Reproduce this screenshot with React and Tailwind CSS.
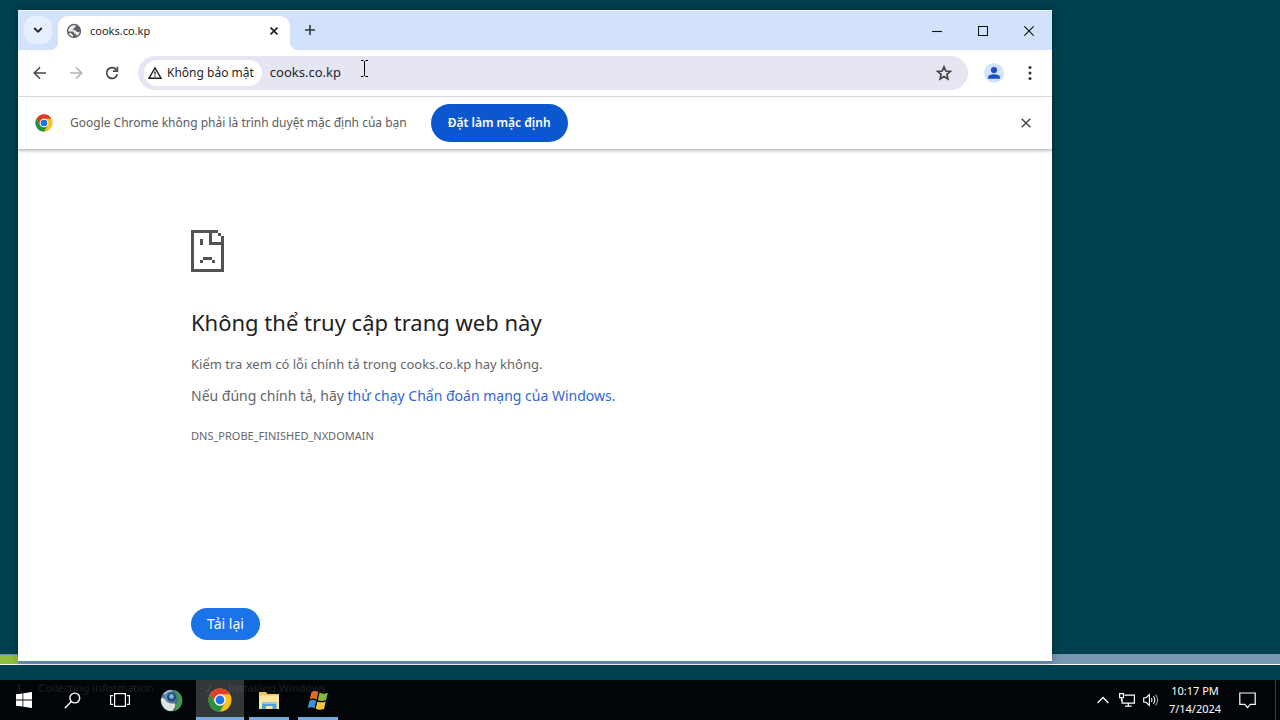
import React from 'react';
import clsx from 'clsx';

const PROGRESS_STEPS = [
  { id: 1, number: '1', label: 'Collecting information' },
  { id: 2, number: '2', label: 'Installing Windows' },
];

/* ---------- Icons ---------- */

const ChromeIcon = ({ size }) => (
  <svg width={size} height={size} viewBox="0 0 48 48" aria-hidden="true">
    <circle cx="24" cy="24" r="23" fill="#fbc116" />
    <path d="M4.08 12.5A23 23 0 0 1 43.92 12.5H24A11.5 11.5 0 0 0 14.04 29.75z" fill="#e33b2e" />
    <path d="M4.08 12.5A23 23 0 0 0 24 47L33.96 29.75A11.5 11.5 0 0 1 14.04 29.75z" fill="#229342" />
    <circle cx="24" cy="24" r="11.5" fill="#fff" />
    <circle cx="24" cy="24" r="8.8" fill="#1a73e8" />
  </svg>
);

const GlobeIcon = () => (
  <svg width="16" height="16" viewBox="0 0 16 16" aria-hidden="true">
    <circle cx="8" cy="8" r="7.2" fill="#5f6368" />
    <path d="M7.6 2.2c1.6-.2 2.3.4 2.1 1.3-.2.8-1.3.6-1.4 1.4-.1.9-1.6.6-1.6 1.5 0 .8 2.5.5 3.3 1.3.5.5.3 1.2 1.2 1.4.8.2 1.6-.4 2.4-.2-.3 1.5-1.3 3-2.6 3.8-.8-.2-.6-1.5-1.4-1.9-.7-.3-1.5 0-1.5-.8 0-.9-.7-1.4-1.7-1.4H2.3c-.2-2.9 2-6 5.3-6.4z" fill="#fff" opacity=".9" />
    <path d="M2.6 10.2h2.2c.9 0 .7 1.2 1.6 1.3.7.1.6 1.2.6 2.2-2-.3-3.6-1.7-4.4-3.500z" fill="#fff" opacity=".9" />
  </svg>
);

const ChevronDownIcon = () => (
  <svg width="10" height="10" viewBox="0 0 10 10" fill="none" stroke="#1f1f1f" strokeWidth="1.8" aria-hidden="true">
    <path d="M1.2 3L5 6.8 8.8 3" />
  </svg>
);

const CrossIcon = ({ size, color, strokeWidth }) => (
  <svg width={size} height={size} viewBox="0 0 10 10" fill="none" stroke={color} strokeWidth={strokeWidth} aria-hidden="true">
    <path d="M.7.7l8.6 8.6M9.3.7L.7 9.3" />
  </svg>
);

const PlusIcon = () => (
  <svg width="12" height="12" viewBox="0 0 12 12" fill="none" stroke="#30343c" strokeWidth="1.6" aria-hidden="true">
    <path d="M6 1v10M1 6h10" />
  </svg>
);

const ArrowIcon = ({ color, flipped }) => (
  <svg width="14" height="14" viewBox="0 0 14 14" fill="none" stroke={color} strokeWidth="1.6" aria-hidden="true">
    <path d={flipped ? 'M1 7h11M7 1.3L12.7 7 7 12.7' : 'M13 7H2M7 1.3L1.3 7 7 12.7'} />
  </svg>
);

const ReloadIcon = () => (
  <svg width="14" height="14" viewBox="0 0 14 14" fill="none" stroke="#474747" strokeWidth="1.7" aria-hidden="true">
    <path d="M12.3 8.3A5.4 5.4 0 1 1 11.3 3.7" />
    <path d="M12.4.8v4.4H8" />
  </svg>
);

const WarningIcon = () => (
  <svg width="14" height="14" viewBox="0 0 14 14" fill="none" stroke="#1f1f1f" strokeWidth="1.4" aria-hidden="true">
    <path d="M7 1.8L13 12.2H1z" />
    <path d="M7 5.4v3.2M7 9.4v1.4" />
  </svg>
);

const StarIcon = () => (
  <svg width="16" height="16" viewBox="0 0 16 16" fill="none" stroke="#474747" strokeWidth="1.7" aria-hidden="true">
    <path d="M8 1.8l1.8 4.2 4.6.4-3.5 3 1.05 4.5L8 11.5l-3.95 2.4 1.05-4.500-3.500-3 4.600-.4z" />
  </svg>
);

const AvatarIcon = () => (
  <svg width="20" height="20" viewBox="0 0 20 20" aria-hidden="true">
    <circle cx="10" cy="10" r="10" fill="#d3e3fd" />
    <circle cx="10" cy="7" r="3.1" fill="#1b4fc4" />
    <path d="M4 15.8v-1.6c0-2 3-3 6-3s6 1 6 3v1.6z" fill="#1b4fc4" />
  </svg>
);

const DotsIcon = () => (
  <svg width="4" height="14" viewBox="0 0 4 14" fill="#333" aria-hidden="true">
    <circle cx="2" cy="1.6" r="1.5" />
    <circle cx="2" cy="7" r="1.5" />
    <circle cx="2" cy="12.4" r="1.5" />
  </svg>
);

const SadPageIcon = () => (
  <svg width="33" height="42" viewBox="0 0 11 14" fill="#535353" shapeRendering="crispEdges" aria-hidden="true">
    <path d="M0 0h9v1H7v3h4v10H0zM1 1v12h9V5H6V1z" fillRule="evenodd" />
    <path d="M9 1h1v1H9zM10 2h1v3h-1zM3 3h1v2H3zM4 9h3v1H4zM3 10h1v1H3zM7 10h1v1H7z" />
  </svg>
);

const WindowsIcon = () => (
  <svg width="16" height="16" viewBox="0 0 16 16" fill="#fff" aria-hidden="true">
    <path d="M0 2.3l6.5-.9v6.2H0zM7.3 1.3L16 0v7.6H7.3zM0 8.4h6.5v6.2L0 13.7zM7.3 8.4H16V16l-8.7-1.3z" />
  </svg>
);

const SearchIcon = () => (
  <svg width="17" height="17" viewBox="0 0 17 17" fill="none" stroke="#fff" strokeWidth="1.4" aria-hidden="true">
    <circle cx="10.8" cy="6" r="4.9" />
    <path d="M7.3 9.6L.8 16.2" />
  </svg>
);

const TaskViewIcon = () => (
  <svg width="20" height="14" viewBox="0 0 20 14" fill="none" stroke="#fff" strokeWidth="1.2" aria-hidden="true">
    <path d="M4.6.6h10.8v12.8H4.6zM3 2.6H.6v8.8H3M17 2.6h2.4v8.8H17" />
  </svg>
);

const EarthIcon = () => (
  <svg width="23" height="23" viewBox="0 0 23 23" aria-hidden="true">
    <defs>
      <radialGradient id="earth" cx="0.4" cy="0.35" r="0.7">
        <stop offset="0" stopColor="#7fa9cc" />
        <stop offset="0.5" stopColor="#44708f" />
        <stop offset="1" stopColor="#3c6b48" />
      </radialGradient>
    </defs>
    <circle cx="11.5" cy="11.5" r="10.8" fill="url(#earth)" />
    <path d="M14 1.3c5 1 8.4 5.4 8.3 10.2-.1 5.4-3.7 9.3-7.3 10.3 1.5-3 .3-5.3 2-7.8 1.8-3 1.2-8-3-12.700z" fill="#43994d" />
    <path d="M.9 9.500c2.600-1.500 4 .5 5.300 2.700 2 2.600 6.200 2 8.800 2.300 1.200 2-1 6-3 7.600C5.500 22.500 .7 17.200.9 9.500z" fill="#dfe3dc" />
    <path d="M4 5.500C6 2.800 9 1.600 12 1.800" fill="none" stroke="#b9cbd4" strokeWidth="1.5" />
    <circle cx="11.5" cy="8" r="4.5" fill="#1d4a78" />
    <circle cx="11.5" cy="7.5" r="2.4" fill="#7fb0dc" />
  </svg>
);

const FolderIcon = () => (
  <svg width="22" height="19" viewBox="0 0 22 19" aria-hidden="true">
    <path d="M1 1h7l1.5 2H21v15H1z" fill="#e9c65e" />
    <path d="M1 4.5h20V18H1z" fill="#fbe69a" />
    <path d="M4 18v-6.5h14.5V18h-4v-3H8v3z" fill="#4ba3dd" />
    <path d="M4 11.5h14.5V13H4z" fill="#8fcaf0" />
  </svg>
);

const WindowsFlagIcon = () => (
  <svg width="22" height="21" viewBox="0 0 22 21" aria-hidden="true">
    <path d="M4.5 2C7 .6 9.3.7 11.3 2L9.6 9.6C7.5 8.3 5.2 8.3 2.7 9.5z" fill="#e9682c" />
    <path d="M12.5 2.6c2.3 1.3 5 1.4 8.3.2L19 10.3c-3 1.2-5.8 1-8.2-.2z" fill="#85b93c" />
    <path d="M2.4 10.7c2.5-1.2 4.8-1.1 6.9.1l-1.8 7.5C5.5 17.1 3.2 17 .7 18.2z" fill="#3f8fd8" />
    <path d="M10.5 11.4c2.4 1.2 5.2 1.3 8.2.1L17 19c-3.2 1.2-6 1-8.3-.2z" fill="#f6c73a" />
  </svg>
);

const TrayChevronIcon = () => (
  <svg width="12" height="8" viewBox="0 0 12 8" fill="none" stroke="#fff" strokeWidth="1.3" aria-hidden="true">
    <path d="M.6 7L6 1.5 11.4 7" />
  </svg>
);

const NetworkIcon = () => (
  <svg width="16" height="14" viewBox="0 0 16 14" fill="none" stroke="#fff" strokeWidth="1.2" aria-hidden="true">
    <path d="M5.5 2.1h9.9v8H3.1V6M9.3 10.1V13M6 13.2h6.6" />
    <path d="M.6.7h3.9v3.9H.6zM2.5 4.6V8" />
  </svg>
);

const VolumeIcon = () => (
  <svg width="16" height="14" viewBox="0 0 16 14" fill="none" stroke="#fff" strokeWidth="1.1" aria-hidden="true">
    <path d="M.7 4.7h2.4L6.4 1.5v11L3.1 9.3H.7z" />
    <path d="M8.4 5q1.3 2 0 4M10.5 3.3q2.6 3.7 0 7.4" />
    <path d="M12.6 1.6q4 5.4 0 10.8" stroke="#999" />
  </svg>
);

const ActionCenterIcon = () => (
  <svg width="17" height="17" viewBox="0 0 17 17" fill="none" stroke="#fff" strokeWidth="1.2" aria-hidden="true">
    <path d="M.8 1h15.4v11.4h-4.9l-2.8 3.2-2.8-3.2H.8z" />
  </svg>
);

/* ---------- Browser window ---------- */

const WINDOW_BUTTONS = [
  { label: 'Minimize', path: 'M0 5.5h10' },
  { label: 'Maximize', path: 'M.5.5h9v9h-9z' },
  { label: 'Close', path: 'M.3.3l9.4 9.4M9.7.3L.3 9.7' },
];

const TabStrip = () => (
  <div className="flex h-10 items-end border-t border-[#f1f6ff] bg-[#d3e2fc]">
    <button className="mb-1.5 ml-1.5 flex size-7 items-center justify-center rounded-[10px] bg-[#e6effe]" aria-label="Search tabs">
      <ChevronDownIcon />
    </button>
    <div className="relative ml-1.5 flex h-[34px] w-[232px] items-center rounded-t-[10px] bg-white pb-1 pl-2 pr-2.5">
      <span className="absolute -left-2 bottom-0 size-2 bg-[radial-gradient(circle_at_0_0,transparent_8px,white_8px)]" />
      <span className="absolute -right-2 bottom-0 size-2 bg-[radial-gradient(circle_at_100%_0,transparent_8px,white_8px)]" />
      <GlobeIcon />
      <span className="ml-2 flex-1 text-[11px] text-[#1f1f1f]">cooks.co.kp</span>
      <button className="flex size-3 items-center justify-center" aria-label="Close tab">
        <CrossIcon size={8} color="#1f1f1f" strokeWidth={2} />
      </button>
    </div>
    <button className="mb-1.5 ml-1.5 flex size-7 items-center justify-center" aria-label="New tab">
      <PlusIcon />
    </button>
    <div className="ml-auto flex self-stretch">
      {WINDOW_BUTTONS.map(button => (
        <button key={button.label} className="flex w-[46px] items-center justify-center" aria-label={button.label}>
          <svg width="10" height="10" viewBox="0 0 10 10" fill="none" stroke="#111" strokeWidth="1.1" aria-hidden="true">
            <path d={button.path} />
          </svg>
        </button>
      ))}
    </div>
  </div>
);

const Toolbar = () => (
  <div className="flex h-[47px] items-center gap-2 border-b border-[#dfe1e5] bg-white px-2">
    <button className="flex size-7 items-center justify-center" aria-label="Back">
      <ArrowIcon color="#474747" />
    </button>
    <button className="flex size-7 items-center justify-center" aria-label="Forward" disabled>
      <ArrowIcon color="#b4b4b4" flipped />
    </button>
    <button className="flex size-7 items-center justify-center" aria-label="Reload">
      <ReloadIcon />
    </button>
    <div className="mx-1 flex h-[34px] flex-1 items-center rounded-full bg-[#e5e6f1] pl-1.5 pr-4">
      <button className="flex h-[26px] items-center gap-[5px] whitespace-nowrap rounded-full bg-white pl-1 pr-2 text-xs text-[#1f1f1f]">
        <WarningIcon />
        Không bảo mật
      </button>
      <input
        className="ml-2 min-w-0 flex-1 bg-transparent text-[13px] text-[#24262b] outline-none"
        type="text"
        aria-label="Address"
        defaultValue="cooks.co.kp"
      />
      <button aria-label="Bookmark this page">
        <StarIcon />
      </button>
    </div>
    <button className="flex size-7 items-center justify-center" aria-label="Profile">
      <AvatarIcon />
    </button>
    <button className="flex size-7 items-center justify-center" aria-label="Menu">
      <DotsIcon />
    </button>
  </div>
);

const DefaultBrowserBar = () => (
  <div className="relative flex h-[53px] items-center border-b border-[#c9c9c9] bg-white pl-[17px] pr-5 shadow-[0_1px_3px_rgba(0,0,0,0.25)]">
    <ChromeIcon size={18} />
    <p className="ml-[17px] text-xs text-[#5a5d61]">Google Chrome không phải là trình duyệt mặc định của bạn</p>
    <button className="ml-6 h-[38px] rounded-full bg-[#0b57d0] px-[17px] text-xs font-semibold text-white">
      Đặt làm mặc định
    </button>
    <button className="ml-auto flex size-3 items-center justify-center" aria-label="Close">
      <CrossIcon size={10} color="#474747" strokeWidth={1.5} />
    </button>
  </div>
);

const ErrorPage = () => (
  <main className="mx-auto flex w-full max-w-[688px] flex-1 flex-col pb-[21px] pt-20">
    <SadPageIcon />
    <h1 className="mt-8 text-[22px] font-normal leading-9 text-[#202124]">Không thể truy cập trang web này</h1>
    <p className="mt-3 text-[13px] leading-6 text-[#646669]">Kiểm tra xem có lỗi chính tả trong cooks.co.kp hay không.</p>
    <p className="mt-2 text-sm leading-6 text-[#646669]">
      Nếu đúng chính tả, hãy{' '}
      <a href="#diagnostics" className="text-[#3367d6]">thử chạy Chẩn đoán mạng của Windows</a>.
    </p>
    <p className="mt-4 text-[11px] leading-6 text-[#646669]">DNS_PROBE_FINISHED_NXDOMAIN</p>
    <button className="mt-auto h-8 self-start rounded-full bg-[#1a73e8] px-4 text-sm text-white">Tải lại</button>
  </main>
);

const BrowserWindow = () => (
  <div className="relative ml-[18px] mr-[228px] flex flex-1 flex-col border-b border-[#4d88b8] bg-white shadow-[0_0_8px_rgba(0,0,0,0.3)]">
    <TabStrip />
    <Toolbar />
    <DefaultBrowserBar />
    <ErrorPage />
  </div>
);

/* ---------- Taskbar ---------- */

const SYSTEM_BUTTONS = [
  { label: 'Start', icon: WindowsIcon },
  { label: 'Search', icon: SearchIcon },
  { label: 'Task View', icon: TaskViewIcon },
];

const APPS = [
  { label: 'Network', icon: EarthIcon },
  { label: 'Google Chrome', icon: () => <ChromeIcon size={24} />, running: true, active: true },
  { label: 'File Explorer', icon: FolderIcon, running: true },
  { label: 'Windows Setup', icon: WindowsFlagIcon, running: true },
];

const Taskbar = () => (
  <footer className="relative flex h-10 items-stretch bg-[#010507]">
    {/* Setup steps showing faintly through the bar */}
    <ol className="absolute left-4 top-0 flex gap-[52px] text-[11px] leading-4 text-[#1d2124]" aria-hidden="true">
      {PROGRESS_STEPS.map(step => (
        <li key={step.id} className="flex gap-4">
          <span>{step.number}</span>
          {step.label}
        </li>
      ))}
    </ol>

    {SYSTEM_BUTTONS.map(({ label, icon: Icon }) => (
      <button key={label} className="relative flex w-12 items-center justify-center" aria-label={label}>
        <Icon />
      </button>
    ))}

    <div className="relative ml-[3px] flex gap-px">
      {APPS.map(({ label, icon: Icon, running, active }) => (
        <button
          key={label}
          className={clsx('relative flex w-12 items-center justify-center', active && 'bg-white/20')}
          aria-label={label}
        >
          <Icon />
          {running && (
            <span className={clsx('absolute bottom-0 h-[3px] bg-[#76a9dc]', active ? 'inset-x-0' : 'inset-x-1')} />
          )}
        </button>
      ))}
    </div>

    <div className="ml-auto flex items-center text-[11px] text-white">
      <button className="flex w-6 justify-center" aria-label="Show hidden icons"><TrayChevronIcon /></button>
      <button className="flex w-6 justify-center" aria-label="Network"><NetworkIcon /></button>
      <button className="flex w-6 justify-center" aria-label="Volume"><VolumeIcon /></button>
      <button className="w-16 text-center leading-[18px]">
        10:17 PM<br />7/14/2024
      </button>
      <button className="ml-1.5 flex w-7 justify-center" aria-label="Notifications"><ActionCenterIcon /></button>
      <button className="ml-3.5 h-10 w-[5px] border-l border-[#3a3d40]" aria-label="Show desktop" />
    </div>
  </footer>
);

/* ---------- Desktop ---------- */

export default function App() {
  return (
    <div className="flex min-h-screen flex-col bg-[#00404f] font-['Noto_Sans',sans-serif]">
      <div className="relative flex flex-1 flex-col pb-[18px] pt-2.5">
        {/* Setup progress bar behind the window */}
        <div className="absolute inset-x-0 bottom-[15px] h-[11px] border-b border-white bg-[#7896b0]">
          <div className="h-full w-[18px] border-t border-[#6f90ab] bg-[#8fbf3f]" />
        </div>
        <BrowserWindow />
        {/* Text cursor over the address bar */}
        <svg className="absolute left-[360px] top-[60px]" width="9" height="17" viewBox="0 0 9 17" fill="none" stroke="#000" aria-hidden="true">
          <path d="M1 .5h2.5M5.5.5H8M4.5 1v15M1 16.5h2.5M5.5 16.5H8" />
        </svg>
      </div>
      <Taskbar />
    </div>
  );
}
